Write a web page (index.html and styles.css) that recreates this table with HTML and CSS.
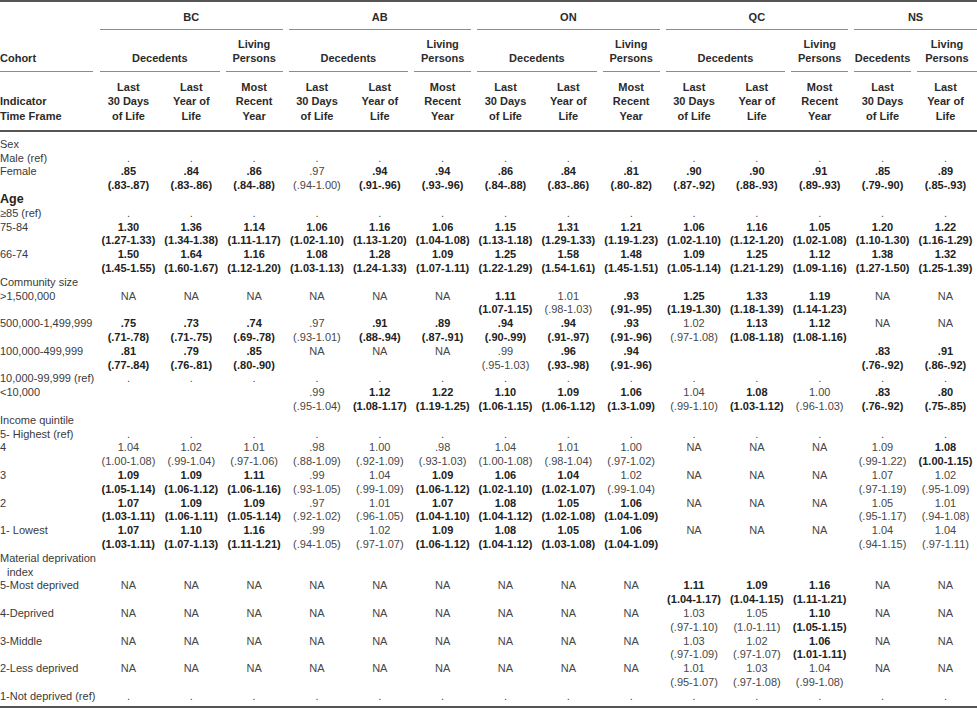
FILE: index.html
```html
<!DOCTYPE html>
<html lang="en">
<head>
<meta charset="utf-8">
<title>Table</title>
<link rel="stylesheet" href="styles.css">
</head>
<body>
<table class="tbl">
<colgroup>
<col class="c0">
<col><col><col><col><col><col><col><col><col><col><col><col><col><col>
</colgroup>
<thead>
<tr class="r1">
<th class="first cohort" rowspan="2"><div class="u">Cohort</div></th>
<th colspan="3"><div class="u">BC</div></th>
<th colspan="3"><div class="u">AB</div></th>
<th colspan="3"><div class="u">ON</div></th>
<th colspan="3"><div class="u">QC</div></th>
<th colspan="2" class="last"><div class="u">NS</div></th>
</tr>
<tr class="r2">
<th colspan="2"><div class="u">Decedents</div></th>
<th><div class="u">Living<br>Persons</div></th>
<th colspan="2"><div class="u">Decedents</div></th>
<th><div class="u">Living<br>Persons</div></th>
<th colspan="2"><div class="u">Decedents</div></th>
<th><div class="u">Living<br>Persons</div></th>
<th colspan="2"><div class="u">Decedents</div></th>
<th><div class="u">Living<br>Persons</div></th>
<th><div class="u">Decedents</div></th>
<th class="last"><div class="u">Living<br>Persons</div></th>
</tr>
<tr class="r3">
<th class="first">Indicator<br>Time Frame</th>
<th>Last<br>30 Days<br>of Life</th>
<th>Last<br>Year of<br>Life</th>
<th>Most<br>Recent<br>Year</th>
<th>Last<br>30 Days<br>of Life</th>
<th>Last<br>Year of<br>Life</th>
<th>Most<br>Recent<br>Year</th>
<th>Last<br>30 Days<br>of Life</th>
<th>Last<br>Year of<br>Life</th>
<th>Most<br>Recent<br>Year</th>
<th>Last<br>30 Days<br>of Life</th>
<th>Last<br>Year of<br>Life</th>
<th>Most<br>Recent<br>Year</th>
<th>Last<br>30 Days<br>of Life</th>
<th>Last<br>Year of<br>Life</th>
</tr>
</thead>
<tbody>
<tr><td class="l">Sex</td><td colspan="14"></td></tr>
<tr class="ref"><td class="l">Male (ref)</td><td>.</td><td>.</td><td>.</td><td>.</td><td>.</td><td>.</td><td>.</td><td>.</td><td>.</td><td>.</td><td>.</td><td>.</td><td>.</td><td>.</td></tr>
<tr><td class="l">Female</td><td class="b">.85<br>(.83-.87)</td><td class="b">.84<br>(.83-.86)</td><td class="b">.86<br>(.84-.88)</td><td>.97<br>(.94-1.00)</td><td class="b">.94<br>(.91-.96)</td><td class="b">.94<br>(.93-.96)</td><td class="b">.86<br>(.84-.88)</td><td class="b">.84<br>(.83-.86)</td><td class="b">.81<br>(.80-.82)</td><td class="b">.90<br>(.87-.92)</td><td class="b">.90<br>(.88-.93)</td><td class="b">.91<br>(.89-.93)</td><td class="b">.85<br>(.79-.90)</td><td class="b">.89<br>(.85-.93)</td></tr>
<tr><td class="l age">Age</td><td colspan="14"></td></tr>
<tr class="ref"><td class="l">≥85 (ref)</td><td>.</td><td>.</td><td>.</td><td>.</td><td>.</td><td>.</td><td>.</td><td>.</td><td>.</td><td>.</td><td>.</td><td>.</td><td>.</td><td>.</td></tr>
<tr><td class="l">75-84</td><td class="b">1.30<br>(1.27-1.33)</td><td class="b">1.36<br>(1.34-1.38)</td><td class="b">1.14<br>(1.11-1.17)</td><td class="b">1.06<br>(1.02-1.10)</td><td class="b">1.16<br>(1.13-1.20)</td><td class="b">1.06<br>(1.04-1.08)</td><td class="b">1.15<br>(1.13-1.18)</td><td class="b">1.31<br>(1.29-1.33)</td><td class="b">1.21<br>(1.19-1.23)</td><td class="b">1.06<br>(1.02-1.10)</td><td class="b">1.16<br>(1.12-1.20)</td><td class="b">1.05<br>(1.02-1.08)</td><td class="b">1.20<br>(1.10-1.30)</td><td class="b">1.22<br>(1.16-1.29)</td></tr>
<tr><td class="l">66-74</td><td class="b">1.50<br>(1.45-1.55)</td><td class="b">1.64<br>(1.60-1.67)</td><td class="b">1.16<br>(1.12-1.20)</td><td class="b">1.08<br>(1.03-1.13)</td><td class="b">1.28<br>(1.24-1.33)</td><td class="b">1.09<br>(1.07-1.11)</td><td class="b">1.25<br>(1.22-1.29)</td><td class="b">1.58<br>(1.54-1.61)</td><td class="b">1.48<br>(1.45-1.51)</td><td class="b">1.09<br>(1.05-1.14)</td><td class="b">1.25<br>(1.21-1.29)</td><td class="b">1.12<br>(1.09-1.16)</td><td class="b">1.38<br>(1.27-1.50)</td><td class="b">1.32<br>(1.25-1.39)</td></tr>
<tr><td class="l">Community size</td><td colspan="14"></td></tr>
<tr><td class="l">&gt;1,500,000</td><td>NA</td><td>NA</td><td>NA</td><td>NA</td><td>NA</td><td>NA</td><td class="b">1.11<br>(1.07-1.15)</td><td>1.01<br>(.98-1.03)</td><td class="b">.93<br>(.91-.95)</td><td class="b">1.25<br>(1.19-1.30)</td><td class="b">1.33<br>(1.18-1.39)</td><td class="b">1.19<br>(1.14-1.23)</td><td>NA</td><td>NA</td></tr>
<tr><td class="l">500,000-1,499,999</td><td class="b">.75<br>(.71-.78)</td><td class="b">.73<br>(.71-.75)</td><td class="b">.74<br>(.69-.78)</td><td>.97<br>(.93-1.01)</td><td class="b">.91<br>(.88-.94)</td><td class="b">.89<br>(.87-.91)</td><td class="b">.94<br>(.90-.99)</td><td class="b">.94<br>(.91-.97)</td><td class="b">.93<br>(.91-.96)</td><td>1.02<br>(.97-1.08)</td><td class="b">1.13<br>(1.08-1.18)</td><td class="b">1.12<br>(1.08-1.16)</td><td>NA</td><td>NA</td></tr>
<tr><td class="l">100,000-499,999</td><td class="b">.81<br>(.77-.84)</td><td class="b">.79<br>(.76-.81)</td><td class="b">.85<br>(.80-.90)</td><td>NA</td><td>NA</td><td>NA</td><td>.99<br>(.95-1.03)</td><td class="b">.96<br>(.93-.98)</td><td class="b">.94<br>(.91-.96)</td><td></td><td></td><td></td><td class="b">.83<br>(.76-.92)</td><td class="b">.91<br>(.86-.92)</td></tr>
<tr class="ref"><td class="l">10,000-99,999 (ref)</td><td>.</td><td>.</td><td>.</td><td>.</td><td>.</td><td>.</td><td>.</td><td>.</td><td>.</td><td>.</td><td>.</td><td>.</td><td>.</td><td>.</td></tr>
<tr><td class="l">&lt;10,000</td><td></td><td></td><td></td><td>.99<br>(.95-1.04)</td><td class="b">1.12<br>(1.08-1.17)</td><td class="b">1.22<br>(1.19-1.25)</td><td class="b">1.10<br>(1.06-1.15)</td><td class="b">1.09<br>(1.06-1.12)</td><td class="b">1.06<br>(1.3-1.09)</td><td>1.04<br>(.99-1.10)</td><td class="b">1.08<br>(1.03-1.12)</td><td>1.00<br>(.96-1.03)</td><td class="b">.83<br>(.76-.92)</td><td class="b">.80<br>(.75-.85)</td></tr>
<tr><td class="l">Income quintile</td><td colspan="14"></td></tr>
<tr class="ref"><td class="l">5- Highest (ref)</td><td>.</td><td>.</td><td>.</td><td>.</td><td>.</td><td>.</td><td>.</td><td>.</td><td>.</td><td>.</td><td>.</td><td>.</td><td>.</td><td>.</td></tr>
<tr><td class="l">4</td><td>1.04<br>(1.00-1.08)</td><td>1.02<br>(.99-1.04)</td><td>1.01<br>(.97-1.06)</td><td>.98<br>(.88-1.09)</td><td>1.00<br>(.92-1.09)</td><td>.98<br>(.93-1.03)</td><td>1.04<br>(1.00-1.08)</td><td>1.01<br>(.98-1.04)</td><td>1.00<br>(.97-1.02)</td><td>NA</td><td>NA</td><td>NA</td><td>1.09<br>(.99-1.22)</td><td class="b">1.08<br>(1.00-1.15)</td></tr>
<tr><td class="l">3</td><td class="b">1.09<br>(1.05-1.14)</td><td class="b">1.09<br>(1.06-1.12)</td><td class="b">1.11<br>(1.06-1.16)</td><td>.99<br>(.93-1.05)</td><td>1.04<br>(.99-1.09)</td><td class="b">1.09<br>(1.06-1.12)</td><td class="b">1.06<br>(1.02-1.10)</td><td class="b">1.04<br>(1.02-1.07)</td><td>1.02<br>(.99-1.04)</td><td>NA</td><td>NA</td><td>NA</td><td>1.07<br>(.97-1.19)</td><td>1.02<br>(.95-1.09)</td></tr>
<tr><td class="l">2</td><td class="b">1.07<br>(1.03-1.11)</td><td class="b">1.09<br>(1.06-1.11)</td><td class="b">1.09<br>(1.05-1.14)</td><td>.97<br>(.92-1.02)</td><td>1.01<br>(.96-1.05)</td><td class="b">1.07<br>(1.04-1.10)</td><td class="b">1.08<br>(1.04-1.12)</td><td class="b">1.05<br>(1.02-1.08)</td><td class="b">1.06<br>(1.04-1.09)</td><td>NA</td><td>NA</td><td>NA</td><td>1.05<br>(.95-1.17)</td><td>1.01<br>(.94-1.08)</td></tr>
<tr><td class="l">1- Lowest</td><td class="b">1.07<br>(1.03-1.11)</td><td class="b">1.10<br>(1.07-1.13)</td><td class="b">1.16<br>(1.11-1.21)</td><td>.99<br>(.94-1.05)</td><td>1.02<br>(.97-1.07)</td><td class="b">1.09<br>(1.06-1.12)</td><td class="b">1.08<br>(1.04-1.12)</td><td class="b">1.05<br>(1.03-1.08)</td><td class="b">1.06<br>(1.04-1.09)</td><td>NA</td><td>NA</td><td>NA</td><td>1.04<br>(.94-1.15)</td><td>1.04<br>(.97-1.11)</td></tr>
<tr><td class="l">Material deprivation<br><span class="hang">index</span></td><td colspan="14"></td></tr>
<tr><td class="l">5-Most deprived</td><td>NA</td><td>NA</td><td>NA</td><td>NA</td><td>NA</td><td>NA</td><td>NA</td><td>NA</td><td>NA</td><td class="b">1.11<br>(1.04-1.17)</td><td class="b">1.09<br>(1.04-1.15)</td><td class="b">1.16<br>(1.11-1.21)</td><td>NA</td><td>NA</td></tr>
<tr><td class="l">4-Deprived</td><td>NA</td><td>NA</td><td>NA</td><td>NA</td><td>NA</td><td>NA</td><td>NA</td><td>NA</td><td>NA</td><td>1.03<br>(.97-1.10)</td><td>1.05<br>(1.0-1.11)</td><td class="b">1.10<br>(1.05-1.15)</td><td>NA</td><td>NA</td></tr>
<tr><td class="l">3-Middle</td><td>NA</td><td>NA</td><td>NA</td><td>NA</td><td>NA</td><td>NA</td><td>NA</td><td>NA</td><td>NA</td><td>1.03<br>(.97-1.09)</td><td>1.02<br>(.97-1.07)</td><td class="b">1.06<br>(1.01-1.11)</td><td>NA</td><td>NA</td></tr>
<tr><td class="l">2-Less deprived</td><td>NA</td><td>NA</td><td>NA</td><td>NA</td><td>NA</td><td>NA</td><td>NA</td><td>NA</td><td>NA</td><td>1.01<br>(.95-1.07)</td><td>1.03<br>(.97-1.08)</td><td>1.04<br>(.99-1.08)</td><td>NA</td><td>NA</td></tr>
<tr class="ref"><td class="l">1-Not deprived (ref)</td><td>.</td><td>.</td><td>.</td><td>.</td><td>.</td><td>.</td><td>.</td><td>.</td><td>.</td><td>.</td><td>.</td><td>.</td><td>.</td><td>.</td></tr>
</tbody>
</table>
</body>
</html>
```

FILE: styles.css
```css
html, body {
  margin: 0;
  padding: 0;
  background: #ffffff;
}

body {
  font-family: "Liberation Sans", Arial, sans-serif;
  font-size: 11px;
  color: #333333;
}

.tbl {
  width: 977px;
  table-layout: fixed;
  border-collapse: separate;
  border-spacing: 0;
  border-top: 2px solid #555555;
  border-bottom: 2px solid #555555;
}

.c0 {
  width: 97px;
}

th {
  font-weight: bold;
  color: #2b2b2b;
  padding: 0 3px;
  vertical-align: bottom;
  text-align: center;
  line-height: 14px;
  white-space: nowrap;
}

th.first {
  padding: 0 4px 0 0;
  text-align: left;
}

th.last {
  padding-right: 0;
}

.u {
  border-bottom: 1px solid #8c8c8c;
}

.r1 .u {
  padding: 8px 0 5px;
}

.r2 .u {
  padding: 7px 0 6px;
}

.r1 .cohort .u {
  padding: 0 0 6px;
}

.r3 th {
  padding-top: 8px;
  padding-bottom: 7px;
  line-height: 14.3px;
  border-bottom: 2px solid #555555;
}

td {
  padding: 0;
  line-height: 13.8px;
  vertical-align: top;
  text-align: center;
  color: #474747;
  white-space: nowrap;
}

td.l {
  text-align: left;
  color: #3a3a3a;
}

td.b {
  font-weight: bold;
  color: #222222;
}

td.age {
  font-weight: bold;
  font-size: 12.5px;
  color: #222222;
}

.hang {
  padding-left: 7px;
}

tbody tr:first-child td {
  padding-top: 6px;
}

tbody tr:last-child td {
  padding-bottom: 2px;
}
```
